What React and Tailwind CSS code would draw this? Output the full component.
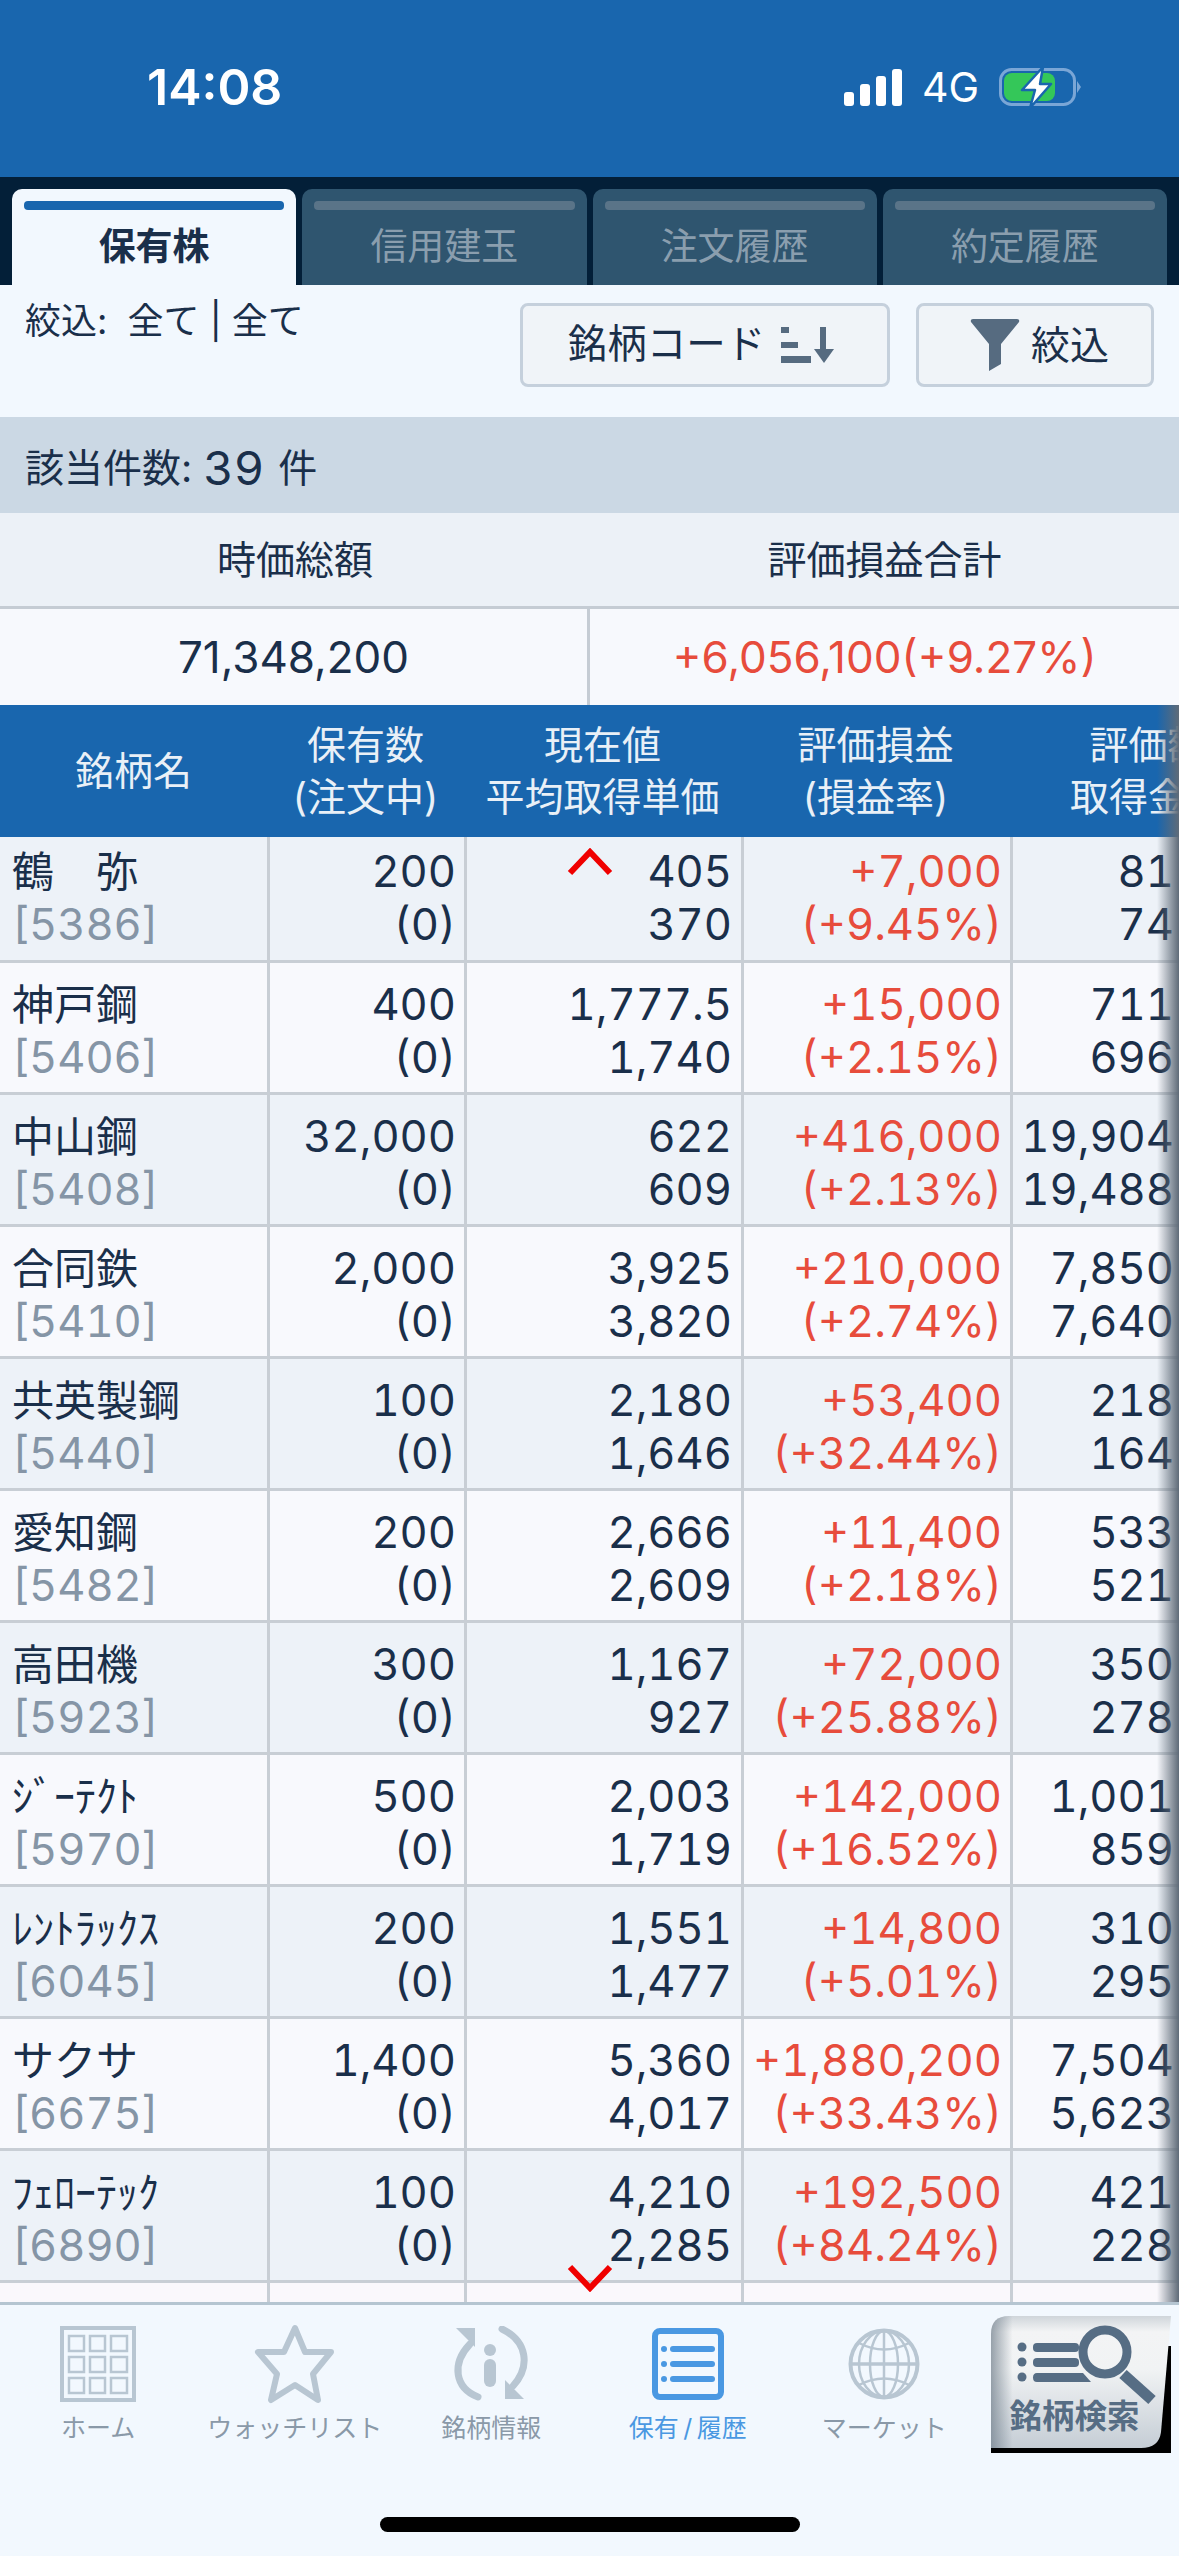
import React from "react";

const rows = [
  { name: "鶴　弥", code: "5386", qty: "200", price: "405", avg: "370", pl: "+7,000", rate: "(+9.45%)", val: "81", cost: "74" },
  { name: "神戸鋼", code: "5406", qty: "400", price: "1,777.5", avg: "1,740", pl: "+15,000", rate: "(+2.15%)", val: "711", cost: "696" },
  { name: "中山鋼", code: "5408", qty: "32,000", price: "622", avg: "609", pl: "+416,000", rate: "(+2.13%)", val: "19,904", cost: "19,488" },
  { name: "合同鉄", code: "5410", qty: "2,000", price: "3,925", avg: "3,820", pl: "+210,000", rate: "(+2.74%)", val: "7,850", cost: "7,640" },
  { name: "共英製鋼", code: "5440", qty: "100", price: "2,180", avg: "1,646", pl: "+53,400", rate: "(+32.44%)", val: "218", cost: "164" },
  { name: "愛知鋼", code: "5482", qty: "200", price: "2,666", avg: "2,609", pl: "+11,400", rate: "(+2.18%)", val: "533", cost: "521" },
  { name: "高田機", code: "5923", qty: "300", price: "1,167", avg: "927", pl: "+72,000", rate: "(+25.88%)", val: "350", cost: "278" },
  { name: "ｼﾞｰﾃｸﾄ", code: "5970", qty: "500", price: "2,003", avg: "1,719", pl: "+142,000", rate: "(+16.52%)", val: "1,001", cost: "859" },
  { name: "ﾚﾝﾄﾗｯｸｽ", code: "6045", qty: "200", price: "1,551", avg: "1,477", pl: "+14,800", rate: "(+5.01%)", val: "310", cost: "295" },
  { name: "サクサ", code: "6675", qty: "1,400", price: "5,360", avg: "4,017", pl: "+1,880,200", rate: "(+33.43%)", val: "7,504", cost: "5,623" },
  { name: "ﾌｪﾛｰﾃｯｸ", code: "6890", qty: "100", price: "4,210", avg: "2,285", pl: "+192,500", rate: "(+84.24%)", val: "421", cost: "228" },
];

const Tab = ({ label, active }) => (
  <div className={`flex-1 rounded-t-[10px] px-[12px] pt-[12px] ${active ? "bg-[#f2f8fe]" : "bg-[#2f556f]"}`}>
    <div className={`h-[9px] rounded-[4px] ${active ? "bg-[#1966ae]" : "bg-[#5a7488]"}`} />
    <div className={`text-center text-[37px] leading-[74px] ${active ? "font-bold text-[#1a2f4a]" : "text-[#8a9eae]"}`}>{label}</div>
  </div>
);

const Signal = () => (
  <svg width="58" height="37" viewBox="0 0 58 37" fill="#fff">
    <rect x="0" y="23" width="10" height="14" rx="3" />
    <rect x="16" y="15" width="10" height="22" rx="3" />
    <rect x="32" y="7" width="10" height="30" rx="3" />
    <rect x="48" y="0" width="10" height="37" rx="3" />
  </svg>
);

const Battery = () => (
  <svg width="82" height="44" viewBox="0 0 82 44">
    <rect x="1.5" y="3.5" width="74" height="35" rx="11" fill="none" stroke="#7aa6d6" strokeWidth="3" />
    <rect x="5" y="7" width="51" height="28" rx="8" fill="#34c759" />
    <path d="M78 15 L82 21 L78 27 Z" fill="#7aa6d6" />
    <path d="M44 1 L23 24 L36 24 L31 42 L52 18 L41 18 Z" fill="#fff" stroke="#1966ae" strokeWidth="2.5" strokeLinejoin="round" />
  </svg>
);

const SortIcon = () => (
  <svg width="54" height="36" viewBox="0 0 54 36" fill="#566b80">
    <rect x="0" y="0" width="8" height="6" />
    <rect x="0" y="15" width="17" height="6" />
    <rect x="0" y="29" width="30" height="7" />
    <rect x="39" y="0" width="6" height="24" />
    <path d="M33 22 H53 L43 36 Z" />
  </svg>
);

const FunnelIcon = () => (
  <svg width="50" height="52" viewBox="0 0 50 52" fill="#566b80">
    <path d="M3 0 H47 Q50 0 49 3 L31 25 V45 L19 52 V25 L1 3 Q0 0 3 0 Z" />
  </svg>
);

const HomeIcon = () => (
  <svg width="76" height="76" viewBox="0 0 76 76" fill="none" stroke="#b8c6d2">
    <rect x="2" y="2" width="72" height="72" strokeWidth="4" />
    <g strokeWidth="2.5">
      <rect x="9" y="10" width="15" height="15" />
      <rect x="30" y="10" width="15" height="15" />
      <rect x="51" y="10" width="16" height="15" />
      <rect x="9" y="31" width="15" height="15" />
      <rect x="30" y="31" width="15" height="15" />
      <rect x="51" y="31" width="16" height="15" />
      <rect x="9" y="52" width="15" height="15" />
      <rect x="30" y="52" width="15" height="15" />
      <rect x="51" y="52" width="16" height="15" />
    </g>
  </svg>
);

const StarIcon = () => (
  <svg width="82" height="80" viewBox="-4 -2 82 80" fill="none" stroke="#b8c6d2" strokeWidth="6" strokeLinejoin="round">
    <path d="M37 2 L47 26 L73 26 L55 48 L60 74 L37 59 L13 74 L19 48 L0 26 L26 26 Z" />
  </svg>
);

const InfoIcon = () => (
  <svg width="80" height="76" viewBox="0 0 80 76" fill="#b8c6d2" stroke="none">
    <path d="M19 18 C0 38 4 62 27 71" fill="none" stroke="#b8c6d2" strokeWidth="7" strokeLinecap="round" />
    <path d="M51 3 C76 15 80 40 62 60" fill="none" stroke="#b8c6d2" strokeWidth="7" strokeLinecap="round" />
    <path d="M5 2 H24 V21 Z" />
    <path d="M54 54 V73 H73 Z" />
    <circle cx="39" cy="24" r="6" />
    <rect x="33" y="33" width="12" height="28" rx="6" />
  </svg>
);

const ListIcon = () => (
  <svg width="72" height="72" viewBox="0 0 72 72" fill="#4a98e2">
    <rect x="3" y="3" width="66" height="66" rx="5" fill="none" stroke="#4a98e2" strokeWidth="6" />
    <circle cx="12" cy="21" r="3" />
    <circle cx="12" cy="36" r="3" />
    <circle cx="12" cy="51" r="3" />
    <rect x="18" y="18" width="45" height="6" rx="3" />
    <rect x="18" y="33" width="45" height="6" rx="3" />
    <rect x="18" y="48" width="45" height="6" rx="3" />
  </svg>
);

const GlobeIcon = () => (
  <svg width="72" height="72" viewBox="0 0 72 72" fill="none" stroke="#b8c6d2">
    <circle cx="36" cy="36" r="33.5" strokeWidth="4" />
    <g strokeWidth="2.5">
      <ellipse cx="36" cy="36" rx="14" ry="33" />
      <ellipse cx="36" cy="36" rx="25" ry="33" />
      <path d="M36 3 V69" />
      <path d="M3 36 H69" strokeWidth="3.5" />
      <path d="M11 15 Q36 28 61 15" />
      <path d="M11 57 Q36 44 61 57" />
    </g>
  </svg>
);

const SearchButton = () => (
  <div className="relative h-[137px] w-[180px]">
    <svg className="absolute inset-0" width="180" height="137" viewBox="0 0 180 137">
      <defs>
        <linearGradient id="btn" x1="0" y1="0" x2="0" y2="1">
          <stop offset="0" stopColor="#cfd5da" />
          <stop offset="0.12" stopColor="#f3f4f5" />
          <stop offset="0.4" stopColor="#f1f3f4" />
          <stop offset="1" stopColor="#c5cdd5" />
        </linearGradient>
        <linearGradient id="btnEdge" x1="0" y1="0" x2="1" y2="0">
          <stop offset="0" stopColor="#6f7d8a" stopOpacity="0.7" />
          <stop offset="0.12" stopColor="#6f7d8a" stopOpacity="0" />
        </linearGradient>
      </defs>
      <path d="M20 30 H180 V137 H0 V30 Z" fill="#000" />
      <path d="M18 0 H180 L170 116 Q168 132 150 132 H0 V18 Q0 0 18 0 Z" fill="url(#btn)" />
      <path d="M18 0 H180 L170 116 Q168 132 150 132 H0 V18 Q0 0 18 0 Z" fill="url(#btnEdge)" />
      <g fill="#566d84">
        <circle cx="31" cy="31" r="4.5" />
        <circle cx="31" cy="46" r="4.5" />
        <circle cx="31" cy="61" r="4.5" />
        <rect x="42" y="27" width="46" height="9" rx="4" />
        <rect x="42" y="42" width="46" height="9" rx="4" />
        <path d="M46 57 H92 L100 66 H46 Q42 66 42 61.5 Q42 57 46 57 Z" />
      </g>
      <circle cx="114" cy="36" r="22" fill="none" stroke="#566d84" strokeWidth="9" />
      <path d="M132 58 L161 84" stroke="#566d84" strokeWidth="11" />
    </svg>
    <div className="absolute left-0 top-[81px] w-[168px] text-center text-[32.5px] font-bold leading-[40px] text-[#566d84]">銘柄検索</div>
  </div>
);

const NavItem = ({ icon, label, active }) => (
  <div className="flex flex-col items-center pt-[21px]">
    <div className="flex h-[76px] items-center justify-center">{icon}</div>
    <div className={`mt-[11px] whitespace-nowrap text-[25px] leading-[30px] ${active ? "text-[#4a98e2]" : "text-[#8a99a8]"}`}>{label}</div>
  </div>
);

const HeadCell = ({ top, bottom }) => (
  <div className="flex flex-col items-center justify-center whitespace-nowrap text-center text-[39px] leading-[52px] text-[#e9f0f7]">
    <div>{top}</div>
    {bottom && <div>{bottom}</div>}
  </div>
);

const Row = ({ row, index }) => {
  const bg = index % 2 === 0 ? "bg-[#edf2f8]" : "bg-[#f8f9fd]";
  const pad = index === 0 ? "pt-[8px]" : "pt-[15px]";
  const height = index === 0 ? "h-[126px]" : "h-[132px]";
  return (
    <div className={`grid grid-cols-[270px_197px_277px_269px_166px] border-b-[3px] border-[#c8ced5] text-[43.5px] leading-[53px] tabular-nums text-[#1a2f4a] ${bg} ${height}`}>
      <div className={`border-r-[3px] border-[#c8ced5] pl-[12px] whitespace-nowrap ${pad}`}>
        <div className="text-[42px]">{row.name}</div>
        <div className="text-[#8595a6]">[{row.code}]</div>
      </div>
      <div className={`border-r-[3px] border-[#c8ced5] pr-[8px] text-right ${pad}`}>
        <div>{row.qty}</div>
        <div>(0)</div>
      </div>
      <div className={`border-r-[3px] border-[#c8ced5] pr-[9px] text-right ${pad}`}>
        <div>{row.price}</div>
        <div>{row.avg}</div>
      </div>
      <div className={`border-r-[3px] border-[#c8ced5] pr-[8px] text-right text-[#e74c3c] whitespace-nowrap ${pad}`}>
        <div>{row.pl}</div>
        <div>{row.rate}</div>
      </div>
      <div className={`pr-[5px] text-right ${pad}`}>
        <div>{row.val}</div>
        <div>{row.cost}</div>
      </div>
    </div>
  );
};

const App = () => {
  return (
    <div className="flex h-[2556px] w-[1179px] flex-col overflow-hidden bg-[#f2f8fe] [font-family:Inter,'Noto_Sans_CJK_JP',sans-serif] text-[#1a2f4a]">
      <div className="flex h-[177px] shrink-0 items-center justify-between bg-[#1966ae] pl-[147px] pr-[98px] pb-[2px] text-white">
        <div className="text-[50px] font-semibold">14:08</div>
        <div className="flex items-center">
          <Signal />
          <div className="ml-[20px] text-[41px] leading-none">4G</div>
          <div className="ml-[20px]"><Battery /></div>
        </div>
      </div>

      <div className="flex h-[108px] shrink-0 gap-[6px] bg-[#031f38] px-[12px] pt-[12px]">
        <Tab label="保有株" active />
        <Tab label="信用建玉" />
        <Tab label="注文履歴" />
        <Tab label="約定履歴" />
      </div>

      <div className="flex h-[132px] shrink-0 justify-between pl-[25px] pr-[25px] pt-[18px]">
        <div className="text-[36px] leading-[36px] whitespace-pre">絞込:  全て | 全て</div>
        <div className="flex h-[84px] gap-[26px]">
          <div className="flex w-[370px] items-center justify-center gap-[16px] rounded-[8px] border-[3px] border-[#c5d0dc] bg-[#f0f4f8] pr-[7px] text-[39.5px]">
            <span>銘柄コード</span>
            <SortIcon />
          </div>
          <div className="flex w-[238px] items-center justify-center gap-[11px] rounded-[8px] border-[3px] border-[#c5d0dc] bg-[#f0f4f8] pl-[9px] text-[39px]">
            <FunnelIcon />
            <span>絞込</span>
          </div>
        </div>
      </div>

      <div className="flex h-[96px] shrink-0 items-center bg-[#cbd8e4] pl-[25px] pt-[4px] text-[39px] leading-none">
        該当件数: <span className="ml-[11px] text-[47px] tabular-nums">39</span><span className="ml-[14px]">件</span>
      </div>

      <div className="grid h-[96px] shrink-0 grid-cols-[590px_589px] border-b-[3px] border-[#c5ccd4] bg-[#ecf1f7] pt-[2px] text-[39px]">
        <div className="flex items-center justify-center">時価総額</div>
        <div className="flex items-center justify-center">評価損益合計</div>
      </div>

      <div className="grid h-[96px] shrink-0 grid-cols-[590px_589px] bg-[#f7f9fd] text-[44px]">
        <div className="flex items-center justify-center border-r-[3px] border-[#c5ccd4]">71,348,200</div>
        <div className="flex items-center justify-center text-[#e74c3c]">+6,056,100(+9.27%)</div>
      </div>

      <div className="relative h-[1597px] shrink-0 overflow-hidden">
        <div className="grid h-[132px] grid-cols-[267px_197px_277px_269px_276px] bg-[#1966ae]">
          <HeadCell top="銘柄名" />
          <HeadCell top="保有数" bottom="(注文中)" />
          <HeadCell top="現在値" bottom="平均取得単価" />
          <HeadCell top="評価損益" bottom="(損益率)" />
          <HeadCell top="評価額" bottom="取得金額" />
        </div>
        {rows.map((row, i) => (
          <Row key={row.code} row={row} index={i} />
        ))}
        <div className="grid h-[19px] grid-cols-[270px_197px_277px_269px_166px] bg-[#faf8fc]">
          <div className="border-r-[3px] border-[#c8ced5]" />
          <div className="border-r-[3px] border-[#c8ced5]" />
          <div className="border-r-[3px] border-[#c8ced5]" />
          <div className="border-r-[3px] border-[#c8ced5]" />
          <div />
        </div>

        <svg className="absolute left-[567px] top-[143px]" width="46" height="28" viewBox="0 0 46 28" fill="none" stroke="#f00000" strokeWidth="6">
          <path d="M3 25 L23 4 L43 25" />
        </svg>
        <svg className="absolute left-[567px] top-[1559px]" width="46" height="28" viewBox="0 0 46 28" fill="none" stroke="#f00000" strokeWidth="6">
          <path d="M3 3 L23 24 L43 3" />
        </svg>
        <div className="absolute bottom-0 right-0 top-0 w-[22px] bg-linear-to-l from-[#5f6b78] to-transparent" />
      </div>

      <div className="flex-1 border-t-[3px] border-[#b5c5d1]">
        <div className="grid h-[212px] grid-cols-6">
          <NavItem icon={<HomeIcon />} label="ホーム" />
          <NavItem icon={<StarIcon />} label="ウォッチリスト" />
          <NavItem icon={<InfoIcon />} label="銘柄情報" />
          <NavItem icon={<ListIcon />} label={"保有\u2009/\u2009履歴"} active />
          <NavItem icon={<GlobeIcon />} label="マーケット" />
          <div className="pl-[8px] pt-[11px]"><SearchButton /></div>
        </div>
        <div className="mx-auto h-[15px] w-[420px] rounded-full bg-black" />
      </div>
    </div>
  );
};

export default App;
